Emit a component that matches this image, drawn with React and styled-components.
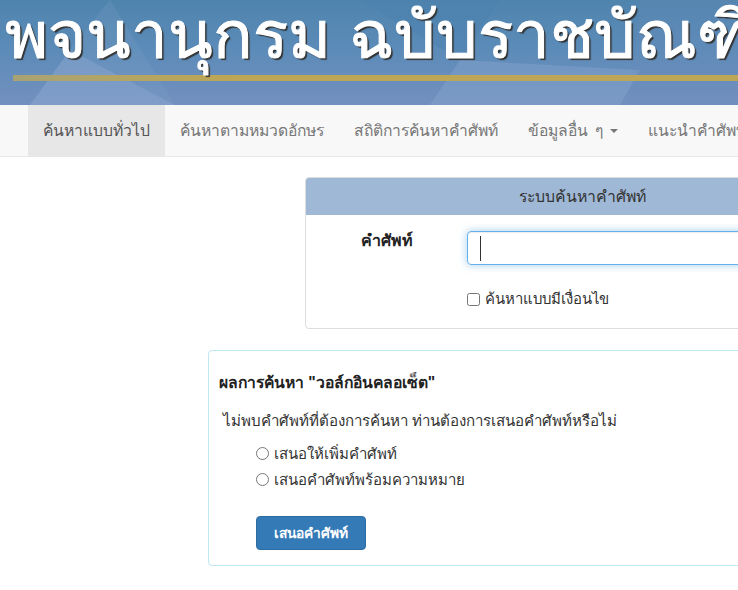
import React from "react";
import styled, { createGlobalStyle } from "styled-components";

const Global = createGlobalStyle`
  html, body { margin: 0; padding: 0; background: #fff; overflow: hidden; }
  body { width: 738px; height: 590px; font-family: "Liberation Sans", Tahoma, "Noto Sans", sans-serif; font-size: 14px; color: #333; }
`;
const Page = styled.div`width: 738px; height: 590px; overflow: hidden;`;
const Banner = styled.header`
  position: relative; height: 105px; overflow: hidden;
  background: linear-gradient(180deg, #4f84ad 0%, #5b8bb8 45%, #7390bf 100%);
`;
const BannerArt = styled.svg`position: absolute; inset: 0; width: 738px; height: 105px;`;
const BannerTitle = styled.h1`
  position: absolute; left: 5px; top: -3px; margin: 0; white-space: nowrap;
  font: 400 65.5px/78px "Liberation Sans", "Noto Sans", sans-serif; color: #fff;
  -webkit-text-stroke: 1px #fff;
  text-shadow: 2px 2px 1px #333;
`;
const Nav = styled.nav`
  display: flex; height: 51px; padding-left: 28px; background: #f8f8f8;
  border-bottom: 1px solid #e7e7e7; white-space: nowrap; overflow: hidden;
`;
const NavItem = styled.a`
  display: flex; align-items: center; padding: 0 15px; font-size: 15.7px; color: #777;
  word-spacing: 3px;
  background: ${p => (p.$active ? "#e7e7e7" : "transparent")};
  ${p => p.$active && "color:#555;"}
`;
const Caret = styled.span`
  display: inline-block; margin-left: 7px; border-top: 4px solid #777;
  border-left: 4px solid transparent; border-right: 4px solid transparent;
`;
const Main = styled.main`padding: 21px 0 0 208px;`;
const SearchPanel = styled.section`
  width: 700px; margin-left: 97px; margin-top: -1px; height: 152px; box-sizing: border-box;
  border: 1px solid #ddd; border-radius: 4px; overflow: hidden;
`;
const PanelHead = styled.div`
  height: 37px; background: #9fb8d5; color: #333; display: flex; align-items: center;
  font-size: 15.8px; padding-left: 213px;
`;
const FieldRow = styled.div`display: flex; padding-top: 16px;`;
const FieldLabel = styled.label`
  width: 161px; padding: 0 0 0 55px; box-sizing: border-box; font-weight: 700; font-size: 16px; color: #222; line-height: 20px;
`;
const Input = styled.div`
  width: 500px; height: 34px; box-sizing: border-box; border: 1px solid #66afe9; border-radius: 4px;
  box-shadow: inset 0 1px 1px rgba(0,0,0,.075), 0 0 8px rgba(102,175,233,.6);
  padding: 4px 12px;
`;
const Cursor = styled.span`display: block; width: 1px; height: 25px; background: #333;`;
const CheckRow = styled.label`
  display: flex; align-items: center; gap: 5px; margin: 23px 0 0 161px; font-size: 14.9px; color: #333; line-height: 22px;
`;
const CheckBox = styled.input`margin: 0; width: 13px; height: 13px;`;
const ResultPanel = styled.section`
  margin-top: 21px; width: 700px; height: 216px; box-sizing: border-box;
  border: 1px solid #bce8f1; border-radius: 4px; padding: 20px 10px 0;
`;
const ResultTitle = styled.h2`margin: 0; font-size: 15.7px; line-height: 24px; font-weight: 700; color: #222;`;
const Notice = styled.p`margin: 14px 0 0 4px; font-size: 15.1px; line-height: 24px; color: #333;`;
const Options = styled.div`margin: 8px 0 0 37px; display: flex; flex-direction: column; gap: 1px;`;
const OptionRow = styled.label`display: flex; align-items: center; gap: 5px; font-size: 15px; line-height: 25px; color: #333;`;
const Radio = styled.input`margin: 0; width: 13px; height: 13px;`;
const SubmitButton = styled.button`
  display: block; margin: 24px 0 0 37px; width: 110px; height: 34px; border: 1px solid #2e6da4; border-radius: 4px;
  background: #337ab7; color: #fff; font: 700 13.8px "Liberation Sans", sans-serif; padding: 0;
`;

export default function App() {
  return (
    <Page>
      <Global />
      <Banner>
        <BannerArt viewBox="0 0 738 105" aria-hidden="true">
          <defs>
            <linearGradient id="gold" x1="0" x2="1" y1="0" y2="0">
              <stop offset="0" stopColor="#a8a374" />
              <stop offset=".3" stopColor="#bda655" />
              <stop offset="1" stopColor="#bda655" />
            </linearGradient>
          </defs>
          <polygon points="30,105 70,50 175,105" fill="#8aa8cf" opacity=".55" />
          <polygon points="70,50 110,0 175,105" fill="#7fa2c8" opacity=".22" />
          <polygon points="430,105 460,60 640,70 620,105" fill="#8aa8cf" opacity=".4" />
          <polygon points="360,0 500,0 460,60" fill="#4a80b0" opacity=".4" />
          <polygon points="640,0 738,0 738,105 630,105" fill="#6b8dbc" opacity=".25" />
          <rect x="13" y="75" width="725" height="6" fill="url(#gold)" />
        </BannerArt>
        <BannerTitle>พจนานุกรม ฉบับราชบัณฑิตยสถาน</BannerTitle>
      </Banner>
      <Nav>
        <NavItem $active>ค้นหาแบบทั่วไป</NavItem>
        <NavItem>ค้นหาตามหมวดอักษร</NavItem>
        <NavItem>สถิติการค้นหาคำศัพท์</NavItem>
        <NavItem>ข้อมูลอื่น ๆ<Caret /></NavItem>
        <NavItem>แนะนำคำศัพท์</NavItem>
      </Nav>
      <Main>
        <SearchPanel>
          <PanelHead>ระบบค้นหาคำศัพท์</PanelHead>
          <FieldRow>
            <FieldLabel>คำศัพท์</FieldLabel>
            <Input><Cursor /></Input>
          </FieldRow>
          <CheckRow><CheckBox type="checkbox" />ค้นหาแบบมีเงื่อนไข</CheckRow>
        </SearchPanel>
        <ResultPanel>
          <ResultTitle>ผลการค้นหา "วอล์กอินคลอเซ็ต"</ResultTitle>
          <Notice>ไม่พบคำศัพท์ที่ต้องการค้นหา ท่านต้องการเสนอคำศัพท์หรือไม่</Notice>
          <Options>
            <OptionRow><Radio type="radio" name="o" />เสนอให้เพิ่มคำศัพท์</OptionRow>
            <OptionRow><Radio type="radio" name="o" />เสนอคำศัพท์พร้อมความหมาย</OptionRow>
          </Options>
          <SubmitButton>เสนอคำศัพท์</SubmitButton>
        </ResultPanel>
      </Main>
    </Page>
  );
}
